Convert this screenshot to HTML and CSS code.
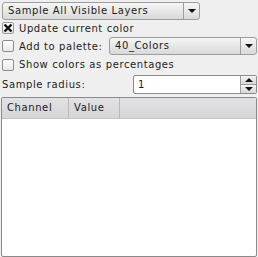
FILE: index.html
```html
<!DOCTYPE html>
<html lang="en">
<head>
    <meta charset="UTF-8">
    <title>Sample Colors</title>
    <link rel="stylesheet" href="styles.css">
</head>
<body>
    <div class="panel">
        <div class="row first">
            <div class="combo top-combo">
                <span class="combo-text">Sample All Visible Layers</span>
                <span class="combo-arrow"><span class="tri-down"></span></span>
            </div>
        </div>
        <div class="row check-row">
            <span class="check checked">
                <svg width="10" height="10" viewBox="0 0 10 10"><path d="M1.5 1.5 L8.5 8.5 M8.5 1.5 L1.5 8.5" stroke="#111" stroke-width="2.4" fill="none"/></svg>
            </span>
            <span class="label">Update current color</span>
        </div>
        <div class="row check-row palette-row">
            <span class="check"></span>
            <span class="label">Add to palette:</span>
            <div class="combo palette-combo">
                <span class="combo-text">40_Colors</span>
                <span class="combo-arrow"><span class="tri-down"></span></span>
            </div>
        </div>
        <div class="row check-row percent-row">
            <span class="check"></span>
            <span class="label">Show colors as percentages</span>
        </div>
        <div class="row radius-row">
            <span class="label">Sample radius:</span>
            <div class="spin">
                <span class="spin-value">1</span>
                <span class="spin-buttons">
                    <span class="spin-btn"><span class="tri-up"></span></span>
                    <span class="spin-btn"><span class="tri-down"></span></span>
                </span>
            </div>
        </div>
        <div class="table">
            <div class="table-head">
                <span class="col col-channel">Channel</span>
                <span class="col col-value">Value</span>
                <span class="col col-rest"></span>
            </div>
            <div class="table-body"></div>
        </div>
    </div>
</body>
</html>
```

FILE: styles.css
```css
body {
    margin: 0;
    background-color: #efefef;
    font-family: 'DejaVu Sans', sans-serif;
    font-size: 10px;
    letter-spacing: 0.6px;
    color: #1c1c1c;
    width: 258px;
    height: 257px;
    overflow: hidden;
}
.panel {
    display: flex;
    flex-direction: column;
    padding: 1px 1px 0 1px;
}
.row {
    display: flex;
    align-items: center;
}
.first {
    padding-left: 1px;
    height: 19px;
}
.combo {
    display: flex;
    height: 18px;
    box-sizing: border-box;
    border: 1px solid #9c9c9c;
    border-radius: 3px;
    background: linear-gradient(#f6f6f6, #d9d9d9);
}
.top-combo {
    width: 198px;
}
.combo-text {
    flex: 1;
    padding-left: 5px;
    line-height: 16px;
    white-space: nowrap;
}
.combo-arrow {
    width: 15px;
    border-left: 1px solid #9c9c9c;
    display: flex;
    align-items: center;
    justify-content: center;
}
.tri-down {
    width: 0;
    height: 0;
    border-left: 4px solid transparent;
    border-right: 4px solid transparent;
    border-top: 4px solid #111;
}
.tri-up {
    width: 0;
    height: 0;
    border-left: 4px solid transparent;
    border-right: 4px solid transparent;
    border-bottom: 4px solid #111;
}
.check-row {
    height: 16px;
    padding-left: 1px;
}
.check {
    width: 12px;
    height: 12px;
    box-sizing: border-box;
    border: 1px solid #8c8c8c;
    border-radius: 2px;
    background: linear-gradient(#ffffff, #e8e8e8);
    display: flex;
    align-items: center;
    justify-content: center;
    margin-right: 5px;
}
.checked {
    border-color: #9a9a9a;
}
.palette-row {
    height: 20px;
}
.percent-row {
    height: 17px;
}
.palette-combo {
    margin-left: auto;
    width: 148px;
}
.radius-row {
    height: 22px;
    padding-left: 1px;
}
.spin {
    margin-left: auto;
    width: 124px;
    height: 19px;
    box-sizing: border-box;
    display: flex;
    border: 1px solid #8c8c8c;
    border-radius: 2px;
    background: #ffffff;
}
.spin-value {
    flex: 1;
    padding-left: 4px;
    line-height: 17px;
}
.spin-buttons {
    width: 15px;
    display: flex;
    flex-direction: column;
    border-left: 1px solid #9c9c9c;
}
.spin-btn {
    flex: 1;
    display: flex;
    align-items: center;
    justify-content: center;
    background: linear-gradient(#f4f4f4, #d6d6d6);
}
.spin-btn + .spin-btn {
    border-top: 1px solid #9c9c9c;
}
.table {
    margin-top: 2px;
    height: 160px;
    box-sizing: border-box;
    border: 1px solid #8a8a8a;
    border-radius: 2px;
    background: #ffffff;
    display: flex;
    flex-direction: column;
}
.table-head {
    display: flex;
    height: 20px;
    background: linear-gradient(#e2e2e4, #d6d6d9);
    border-bottom: 1px solid #c4c4c4;
}
.col {
    line-height: 20px;
    padding-left: 5px;
    box-sizing: border-box;
}
.col-channel {
    width: 67px;
    border-right: 1px solid #b8b8b8;
}
.col-value {
    width: 51px;
    border-right: 1px solid #b8b8b8;
}
.col-rest {
    flex: 1;
}
.table-body {
    flex: 1;
}
```
